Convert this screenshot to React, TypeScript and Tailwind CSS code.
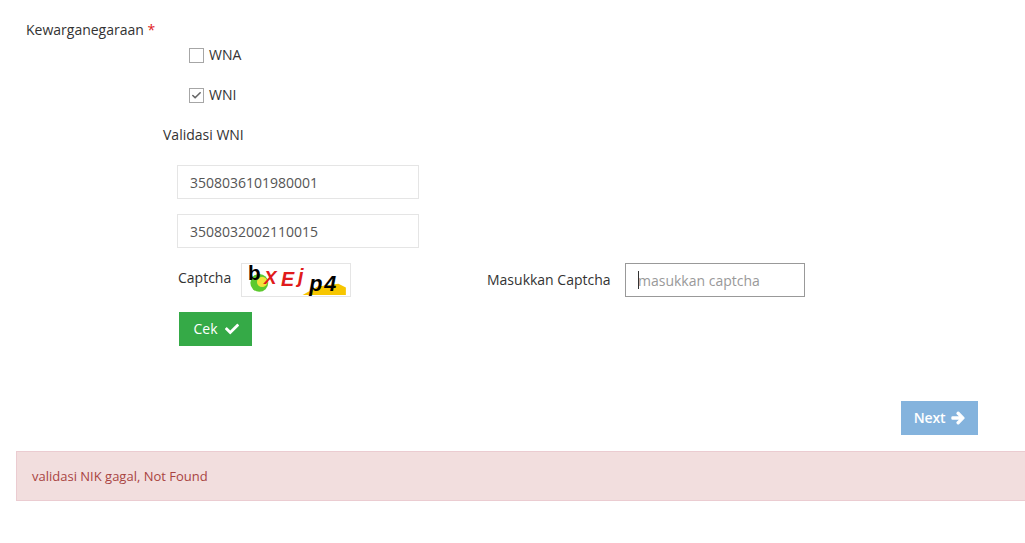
import React from 'react';
import { Check } from 'lucide-react';
import { FaArrowRight, FaCheck } from 'react-icons/fa';

const CheckRow = ({ label, checked }: { label: string; checked?: boolean }) => (
  <div className="flex items-center h-[16px] ml-[189px]">
    <span className="w-[15px] h-[15px] border border-[#a6a6a6] bg-white flex items-center justify-center">
      {checked && <Check className="w-[11px] h-[11px] text-[#666]" strokeWidth={3.5} />}
    </span>
    <span className="ml-[5px] -translate-y-px text-[14px] text-[#333]">{label}</span>
  </div>
);

const CaptchaImage = () => (
  <svg width="110" height="34" viewBox="0 0 110 34" className="block overflow-visible border border-[#e5e5e5] bg-white">
    <path d="M62 33 L78 24 L100 21 L108 25 L108 33 Z" fill="#f7c600" />
    <circle cx="16" cy="20" r="9.5" fill="#5cc92e" />
    <circle cx="19" cy="19" r="5.5" fill="#f2e23a" />
    <text x="4" y="17" fontFamily="Liberation Sans, sans-serif" fontSize="22" fontWeight="700" fill="#000">b</text>
    <text x="21" y="21" fontFamily="Liberation Sans, sans-serif" fontSize="20" fontWeight="700" fontStyle="italic" fill="#e01b1b">X</text>
    <text x="39" y="23" fontFamily="Liberation Sans, sans-serif" fontSize="21" fontWeight="700" fontStyle="italic" fill="#e01b1b">E</text>
    <text x="57" y="20" fontFamily="Liberation Sans, sans-serif" fontSize="21" fontWeight="700" fontStyle="italic" fill="#e01b1b">j</text>
    <text x="69" y="29" fontFamily="Liberation Sans, sans-serif" fontSize="23" fontWeight="700" fontStyle="italic" letterSpacing="2" fill="#000">p4</text>
  </svg>
);

export default function App() {
  return (
    <div className="w-[1025px] h-[543px] overflow-hidden bg-white font-['Open_Sans',sans-serif] text-[14px] text-[#333]">
      <div className="pt-[20px] pl-[26px] h-[20px] box-content leading-[20px]">
        Kewarganegaraan <span className="text-[#e02222]">*</span>
      </div>
      <div className="mt-[7px]">
        <CheckRow label="WNA" />
      </div>
      <div className="mt-[24px]">
        <CheckRow label="WNI" checked />
      </div>
      <div className="mt-[22px] ml-[163px] leading-[20px]">Validasi WNI</div>

      <div className="mt-[20px] ml-[177px] flex flex-col gap-[15px]">
        <input
          readOnly
          value="3508036101980001"
          className="w-[242px] h-[34px] border border-[#e5e5e5] px-[12px] text-[14px] text-[#555] outline-none"
        />
        <input
          readOnly
          value="3508032002110015"
          className="w-[242px] h-[34px] border border-[#e5e5e5] px-[12px] text-[14px] text-[#555] outline-none"
        />
      </div>

      <div className="mt-[15px] ml-[178px] flex items-start h-[34px]">
        <span className="mt-[5px] leading-[20px] w-[63px]">Captcha</span>
        <CaptchaImage />
        <span className="ml-[136px] mt-[7px] leading-[20px] w-[138px]">Masukkan Captcha</span>
        <div className="relative">
          <input
            placeholder="masukkan captcha"
            className="w-[180px] h-[34px] border border-[#999] px-[12px] text-[14px] outline-none placeholder:text-[#999]"
          />
          <span className="absolute left-[13px] top-[8px] w-px h-[18px] bg-[#333]" />
        </div>
      </div>

      <button className="mt-[15px] ml-[179px] w-[73px] h-[34px] bg-[#35aa47] text-white flex items-center justify-center gap-[7px] pl-[1px]">
        <span className="-translate-y-px">Cek</span> <FaCheck className="w-[14px] h-[14px]" />
      </button>

      <div className="mt-[55px] mr-[47px] flex justify-end">
        <button className="w-[77px] h-[34px] bg-[#84b3dd] text-white font-semibold tracking-[-0.2px] flex items-center justify-center gap-[6px]">
          <span className="-translate-y-px">Next</span> <FaArrowRight className="w-[14px] h-[14px] stroke-current stroke-[40]" />
        </button>
      </div>

      <div className="mt-[16px] ml-[16px] h-[50px] flex items-center pl-[15px] pt-[1px] bg-[#f2dede] border border-r-0 border-[#ebccd1] text-[13px] text-[#a94442]">
        validasi NIK gagal, Not Found
      </div>
    </div>
  );
}
